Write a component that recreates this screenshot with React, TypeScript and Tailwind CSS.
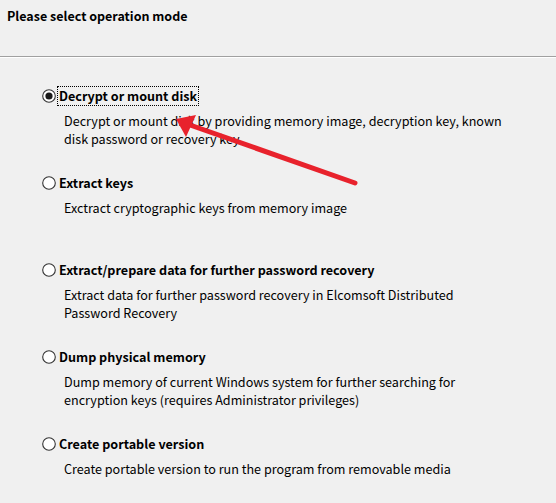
import React from "react";

const items = [
  { label: "Decrypt or mount disk", desc: ["Decrypt or mount disk by providing memory image, decryption key, known", "disk password or recovery key"], checked: true },
  { label: "Extract keys", desc: ["Exctract cryptographic keys from memory image"] },
  { label: "Extract/prepare data for further password recovery", desc: ["Extract data for further password recovery in Elcomsoft Distributed", "Password Recovery"] },
  { label: "Dump physical memory", desc: ["Dump memory of current Windows system for further searching for", "encryption keys (requires Administrator privileges)"] },
  { label: "Create portable version", desc: ["Create portable version to run the program from removable media"] },
];

function Radio({ checked }: { checked?: boolean }) {
  return (
    <svg width="14" height="14" viewBox="0 0 14 14" className="shrink-0">
      <circle cx="7" cy="7" r="6.3" fill="#ffffff" stroke="#333333" strokeWidth="1.1" />
      {checked && <circle cx="7" cy="7" r="3.6" fill="#1a1a1a" />}
    </svg>
  );
}

export default function App() {
  return (
    <div
      className="relative w-[556px] h-[503px] bg-[#f0f0f0] overflow-hidden text-[#000]"
      style={{ fontFamily: '"Noto Sans CJK SC", "Noto Sans", sans-serif' }}
    >
      <div className="h-[56px] pl-[7px] pt-[6px] text-[12.5px] font-bold leading-[20px]">Please select operation mode</div>
      <div className="h-px bg-[#a0a0a0]" />
      <div className="h-px bg-white" />
      <div className="flex flex-col pl-[42px] pt-[28px]">
        {items.map((it, i) => (
          <div key={i} className="h-[87px] flex flex-col">
            <div className="flex items-center h-[20px]">
              <Radio checked={it.checked} />
              <span
                className={
                  "ml-[2px] px-[1px] text-[12.6px] font-bold leading-[18px] " +
                  (it.checked ? "outline outline-1 outline-dotted outline-[#000]" : "")
                }
              >
                {it.label}
              </span>
            </div>
            <div className="pl-[22px] pt-[6px] text-[12.6px] leading-[18px] text-[#000]">
              {it.desc.map((d, j) => (
                <div key={j}>{d}</div>
              ))}
            </div>
          </div>
        ))}
      </div>
      <svg className="absolute left-0 top-0 pointer-events-none" width="556" height="503">
        <line x1="355" y1="183" x2="190" y2="125" stroke="#e8222c" strokeWidth="5" strokeLinecap="round" />
        <polygon points="176,119 196,115 186,137" fill="#e8222c" />
      </svg>
    </div>
  );
}
